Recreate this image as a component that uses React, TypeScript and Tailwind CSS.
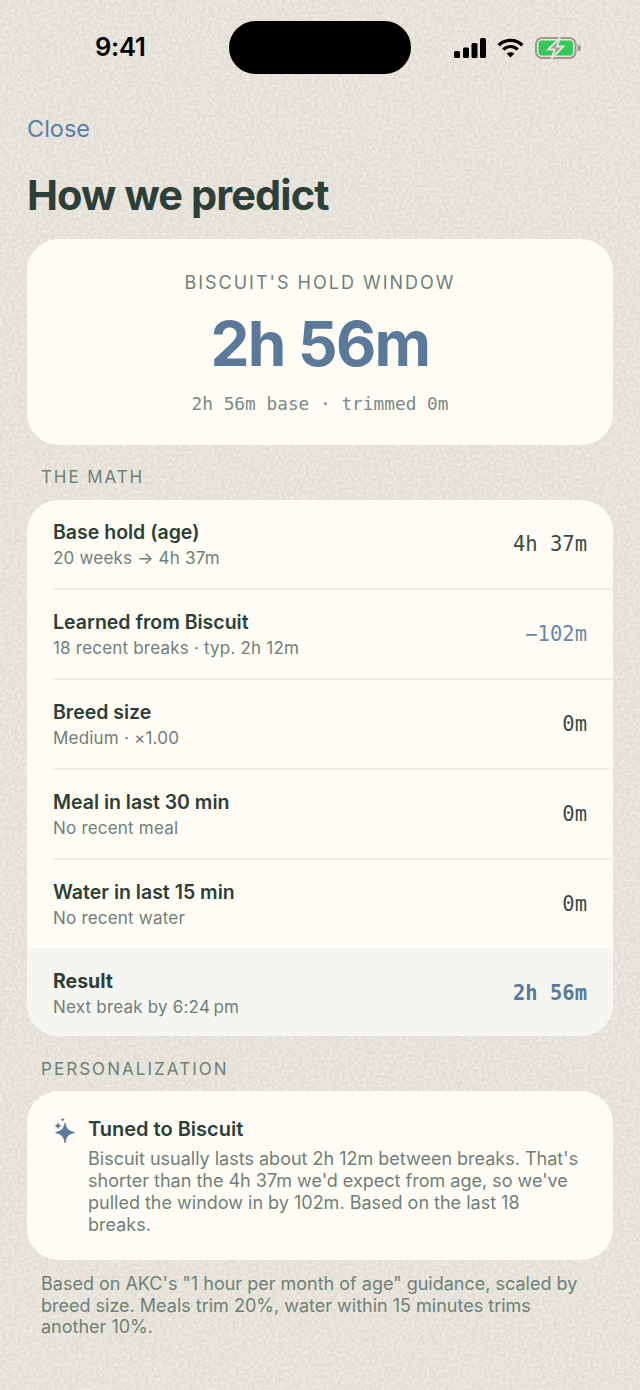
import React from 'react';

const MONO = "font-['DejaVu_Sans_Mono',monospace]";

const rows = [
  { title: 'Base hold (age)', sub: '20 weeks → 4h 37m', value: '4h 37m', color: 'text-[#3a4b44]' },
  { title: 'Learned from Biscuit', sub: '18 recent breaks · typ. 2h 12m', value: '−102m', color: 'text-[#6a87a6]' },
  { title: 'Breed size', sub: 'Medium · ×1.00', value: '0m', color: 'text-[#3a4b44]' },
  { title: 'Meal in last 30 min', sub: 'No recent meal', value: '0m', color: 'text-[#3a4b44]' },
  { title: 'Water in last 15 min', sub: 'No recent water', value: '0m', color: 'text-[#3a4b44]' },
];

const Noise = () => (
  <svg className="absolute inset-0 w-full h-full" aria-hidden="true">
    <filter id="paper">
      <feTurbulence type="fractalNoise" baseFrequency="0.33" numOctaves="3" seed="4" />
      <feColorMatrix values="0 0 0 0 0.96  0 0 0 0 0.95  0 0 0 0 0.92  1.2 0 0 0 -0.42" />
    </filter>
    <rect width="100%" height="100%" filter="url(#paper)" />
  </svg>
);

const StatusIcons = () => (
  <div className="flex items-center">
    <svg width="32" height="20" viewBox="0 0 32 20" fill="#000">
      <rect x="0" y="13" width="6" height="7" rx="1.5" />
      <rect x="9" y="9.5" width="6" height="10.5" rx="1.5" />
      <rect x="17.5" y="5" width="6" height="15" rx="1.5" />
      <rect x="26" y="0" width="6" height="20" rx="1.5" />
    </svg>
    <svg className="ml-[11px]" width="27" height="20" viewBox="0 0 27 20" fill="none" stroke="#000" strokeWidth="3.4">
      <path d="M1.6 7.2 C8.4 .8 18.6 .8 25.4 7.2" />
      <path d="M6.2 11.6 C10.6 7.6 16.4 7.6 20.8 11.6" />
      <path d="M13.5 19.6 L9.6 15.6 C11.8 13.8 15.2 13.8 17.4 15.6 Z" fill="#000" stroke="none" />
    </svg>
    <svg className="ml-[11px]" width="47" height="22" viewBox="0 0 47 22" fill="none">
      <rect x="1" y="1" width="39.5" height="20" rx="6" stroke="#9b9a94" strokeWidth="2" />
      <rect x="3.5" y="3.5" width="34.5" height="15" rx="3.5" fill="#34c759" />
      <path d="M42.5 7.5 C45 8 46 9.5 46 11 C46 12.5 45 14 42.5 14.5 Z" fill="#9b9a94" />
      <path d="M25 0.5 L13 12.5 H19.5 L16.5 21.5 L28.5 9.5 H22 Z" fill="#a3a29b" stroke="#e9e5dc" strokeWidth="1.8" />
    </svg>
  </div>
);

const Sparkle = () => (
  <svg className="shrink-0 mt-[1px]" width="22" height="27" viewBox="0 0 22 27" fill="#5b7a9a">
    <path d="M12 6 C13 11.5 15 13.8 21.5 15.5 C15 17.2 13 19.5 12 26 C11 19.5 9 17.2 2.5 15.5 C9 13.8 11 11.5 12 6 Z" stroke="#5b7a9a" strokeWidth="0.8" strokeLinejoin="round" />
    <path d="M5 5 C5.5 7.2 6.2 8 8.8 8.8 C6.2 9.6 5.5 10.4 5 12.6 C4.5 10.4 3.8 9.6 1.2 8.8 C3.8 8 4.5 7.2 5 5 Z" />
    <path d="M9.7 0.5 C10 1.8 10.4 2.3 11.9 2.7 C10.4 3.1 10 3.6 9.7 4.9 C9.4 3.6 9 3.1 7.5 2.7 C9 2.3 9.4 1.8 9.7 0.5 Z" />
  </svg>
);

export default function App() {
  return (
    <div className="relative w-[640px] h-[1390px] overflow-hidden bg-[#e2ded5] font-['Inter',sans-serif]">
      <Noise />
      <div className="relative flex flex-col">
        {/* status bar */}
        <div className="flex items-center h-[53px] mt-[21px]">
          <div className="w-[240px] pl-[95px] text-[25.5px] font-semibold text-black tracking-[-0.2px]">9:41</div>
          <div className="w-[182px] h-[53px] -ml-[11px] rounded-full bg-black" />
          <div className="ml-[43px]"><StatusIcons /></div>
        </div>

        <div className="px-[27px] mt-[40px] text-[23.5px] leading-[30px] text-[#5b7fa3]">Close</div>
        <h1 className="px-[27px] mt-[26px] text-[41.5px] leading-[50px] font-bold tracking-[-0.9px] text-[#2d3f38]">How we predict</h1>

        <div className="mx-[27px] mt-[19px] h-[206px] rounded-[32px] bg-[#fffcf6] flex flex-col items-center">
          <div className="mt-[32px] text-[18px] leading-[24px] tracking-[2px] text-[#6f8078]">BISCUIT'S HOLD WINDOW</div>
          <div className="mt-[13px] text-[62px] leading-[72px] font-bold tracking-[-1.6px] text-[#5b7a9a]">2h 56m</div>
          <div className={`mt-[12px] ${MONO} text-[17.8px] leading-[24px] text-[#7a8a82]`}>2h 56m base · trimmed 0m</div>
        </div>

        <div className="mx-[41px] mt-[21px] text-[17px] leading-[22px] tracking-[1.9px] text-[#6f8078]">THE MATH</div>

        <div className="mx-[27px] mt-[12px] rounded-[32px] bg-[#fffcf6] overflow-hidden">
          {rows.map((r, i) => (
            <div key={r.title} className={`pl-[26px] flex flex-col ${i < 4 ? 'h-[90px]' : 'h-[88px]'}`}>
              <div className={`flex-1 flex items-center justify-between pr-[26px] ${i < 4 ? 'border-b-2 border-[#f0eee7]' : ''}`}>
                <div>
                  <div className="text-[19.5px] leading-[26px] font-semibold text-[#2d3f38]">{r.title}</div>
                  <div className="mt-[2px] text-[17px] leading-[23px] tracking-[0.2px] text-[#6f8078]">{r.sub}</div>
                </div>
                <div className={`${MONO} text-[20.5px] ${r.color}`}>{r.value}</div>
              </div>
            </div>
          ))}
          <div className="h-[88px] pl-[26px] pr-[26px] pt-[2px] flex items-center justify-between bg-[#f5f5f2]">
            <div>
              <div className="text-[19.5px] leading-[26px] font-bold text-[#2d3f38]">Result</div>
              <div className="mt-[2px] text-[17px] leading-[23px] tracking-[0.2px] text-[#6f8078]">Next break by 6:24{'\u202f'}pm</div>
            </div>
            <div className={`${MONO} font-bold text-[20.5px] text-[#5b7a9a]`}>2h 56m</div>
          </div>
        </div>

        <div className="mx-[41px] mt-[22px] text-[17px] leading-[22px] tracking-[2.05px] text-[#6f8078]">PERSONALIZATION</div>

        <div className="mx-[27px] mt-[11px] h-[169px] rounded-[32px] bg-[#fffcf6] pl-[26px] pr-[26px] pt-[25px] flex gap-[13px]">
          <Sparkle />
          <div>
            <div className="text-[20px] leading-[26px] font-semibold text-[#2d3f38]">Tuned to Biscuit</div>
            <p className="mt-[6px] text-[18px] leading-[22px] text-[#6f8078]">Biscuit usually lasts about 2h 12m between breaks. That's shorter than the 4h 37m we'd expect from age, so we've pulled the window in by 102m. Based on the last 18 breaks.</p>
          </div>
        </div>

        <p className="ml-[41px] mr-[55px] mt-[13px] text-[18px] leading-[21.5px] text-[#6f8078]">Based on AKC's "1 hour per month of age" guidance, scaled by breed size. Meals trim 20%, water within 15 minutes trims another 10%.</p>
      </div>
    </div>
  );
}
